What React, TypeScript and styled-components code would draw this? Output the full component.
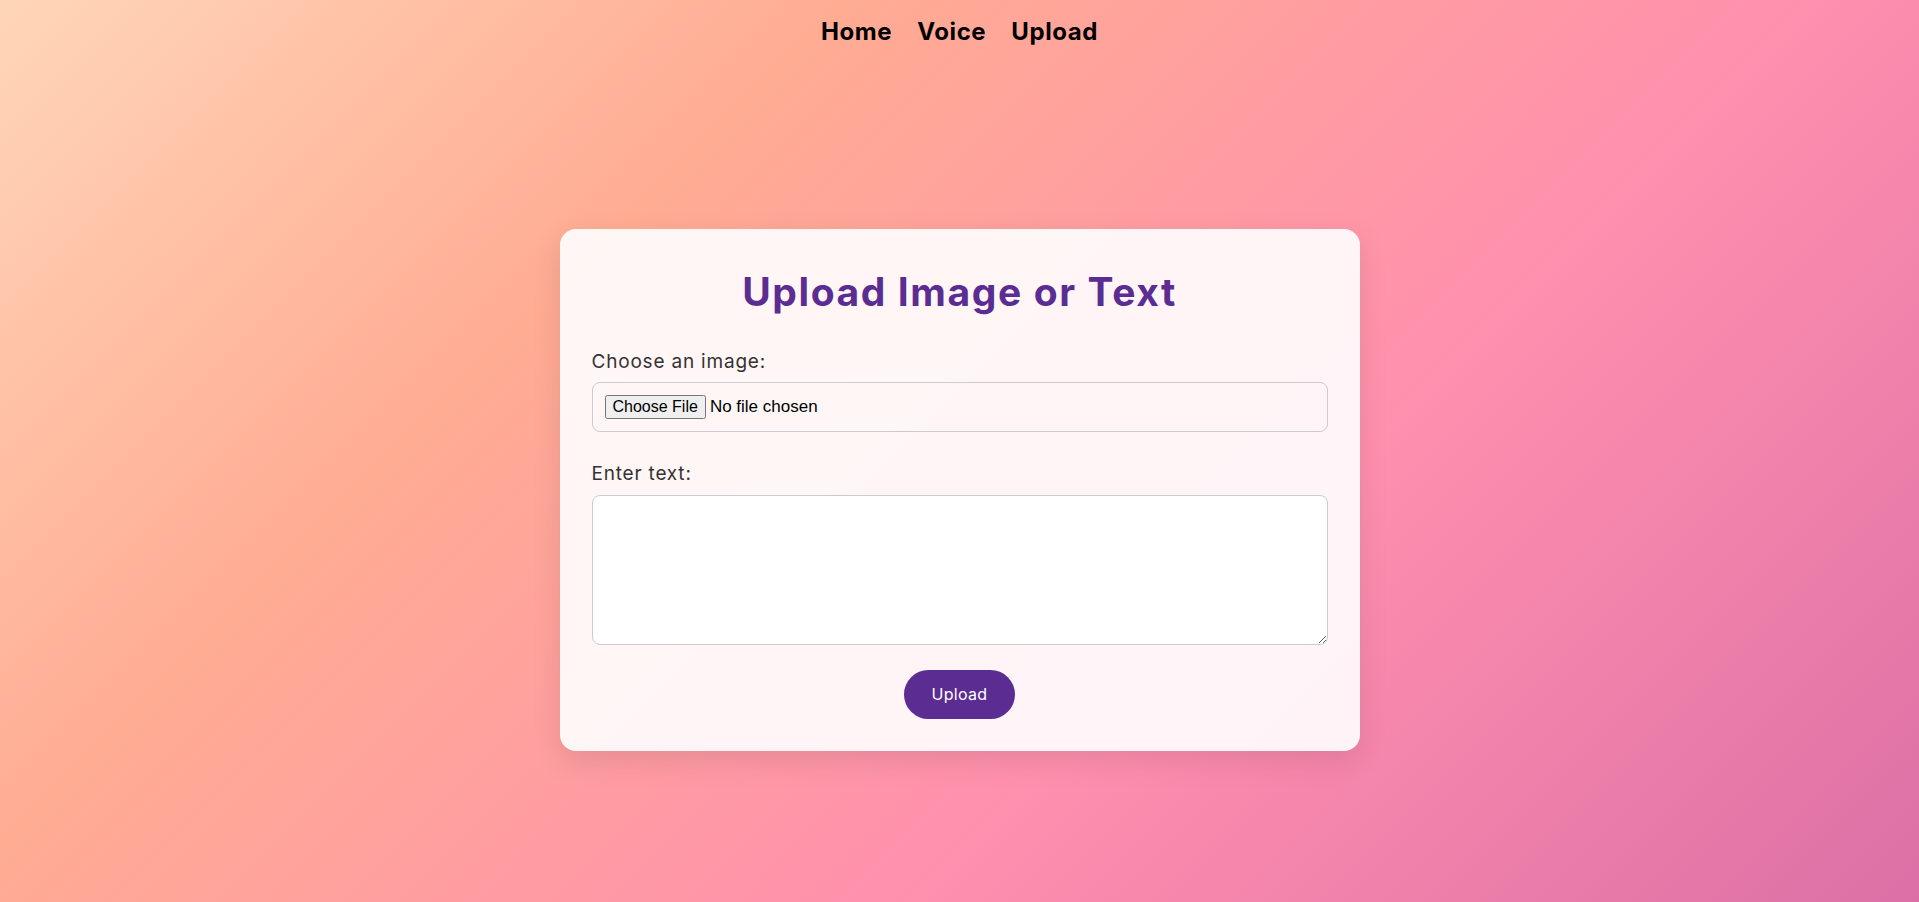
import React from "react"
import styled, { createGlobalStyle } from "styled-components"

const GlobalStyle = createGlobalStyle`
  * {
    box-sizing: border-box;
  }
  html, body {
    margin: 0;
    padding: 0;
  }
  body {
    min-height: 100vh;
    font-family: Inter, "Liberation Sans", sans-serif;
    background: linear-gradient(135deg, #ffd6b8 0%, #ffac93 30%, #ff8fae 65%, #dc6fa6 100%);
    background-attachment: fixed;
  }
`

const Page = styled.div`
  min-height: 100vh;
  display: flex;
  flex-direction: column;
`

const Nav = styled.nav`
  display: flex;
  justify-content: center;
  gap: 25px;
  padding: 14px 0 0;
  height: 78px;
`

const NavLink = styled.a`
  font-size: 24px;
  font-weight: 700;
  letter-spacing: 0.6px;
  color: #000;
  text-decoration: none;
  line-height: 1.5;
  cursor: pointer;
`

const Main = styled.main`
  flex: 1;
  display: flex;
  align-items: center;
  justify-content: center;
`

const Card = styled.div`
  width: 800px;
  padding: 32px;
  border-radius: 16px;
  background: rgba(255, 255, 255, 0.9);
  box-shadow: 0 10px 30px rgba(0, 0, 0, 0.1);
`

const Title = styled.h2`
  margin: 8px 0 28px;
  text-align: center;
  font-size: 39px;
  font-weight: 700;
  letter-spacing: 1.6px;
  line-height: 1.2;
  color: #5b2c91;
`

const Form = styled.form`
  display: flex;
  flex-direction: column;
`

const Field = styled.div`
  margin-bottom: 24px;
`

const Label = styled.label`
  display: block;
  margin: 4px 0 6px;
  font-size: 19px;
  letter-spacing: 0.8px;
  line-height: 1.5;
  color: #333;
`

const FileInput = styled.input`
  display: block;
  width: 100%;
  padding: 12px;
  border: 1px solid #ccc;
  border-radius: 8px;
  background: transparent;
  font-family: "Liberation Sans", Arial, sans-serif;
  font-size: 17px;
  color: #000;
  &::file-selector-button {
    font-family: "Liberation Sans", Arial, sans-serif;
    font-size: 16px;
  }
`

const TextArea = styled.textarea`
  display: block;
  width: 100%;
  height: 150px;
  padding: 12px;
  border: 1px solid #ccc;
  border-radius: 8px;
  background: #fff;
  font-family: inherit;
  font-size: 16px;
`

const SubmitButton = styled.button`
  align-self: center;
  margin-top: 1px;
  padding: 12px 28px;
  border: none;
  border-radius: 25px;
  background: #5b2c91;
  color: #fff;
  font-family: inherit;
  font-size: 16px;
  letter-spacing: 0.3px;
  line-height: 25px;
  cursor: pointer;
`

export default function App() {
  return (
    <Page>
      <GlobalStyle />
      <Nav>
        <NavLink>Home</NavLink>
        <NavLink>Voice</NavLink>
        <NavLink>Upload</NavLink>
      </Nav>
      <Main>
        <Card>
          <Title>Upload Image or Text</Title>
          <Form onSubmit={(e) => e.preventDefault()}>
            <Field>
              <Label htmlFor="image">Choose an image:</Label>
              <FileInput id="image" type="file" accept="image/*" />
            </Field>
            <Field>
              <Label htmlFor="text">Enter text:</Label>
              <TextArea id="text" />
            </Field>
            <SubmitButton type="submit">Upload</SubmitButton>
          </Form>
        </Card>
      </Main>
    </Page>
  )
}
